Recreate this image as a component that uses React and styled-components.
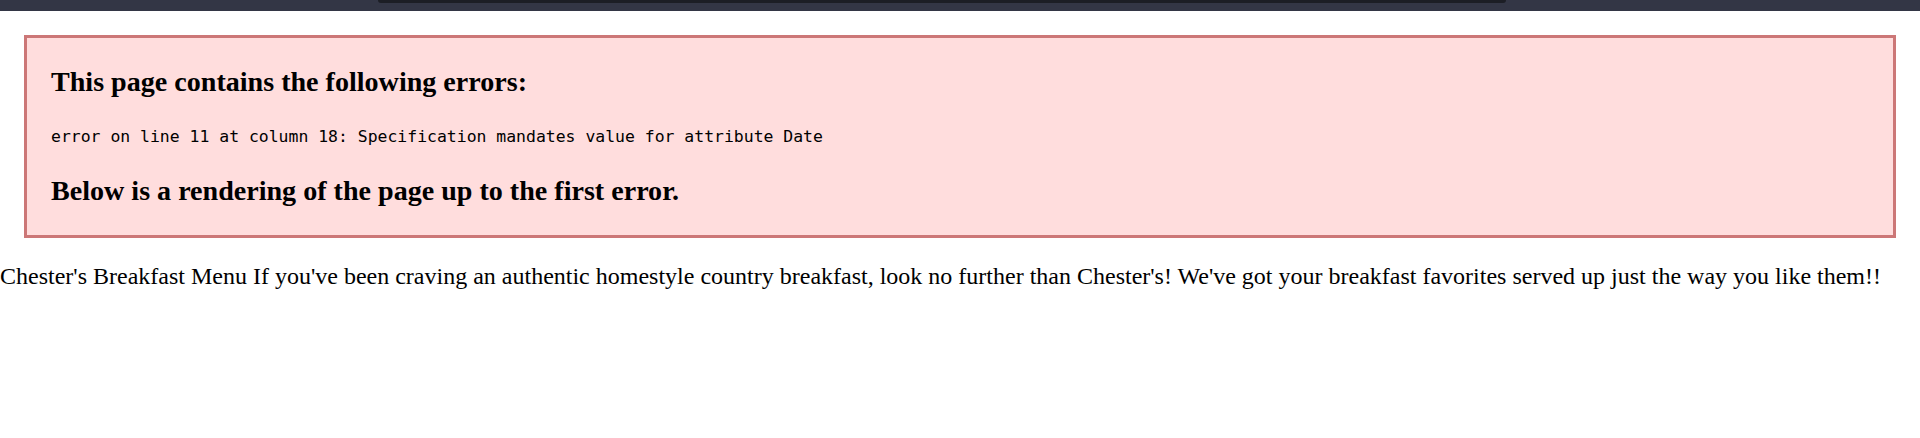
import React from "react";
import styled, { createGlobalStyle } from "styled-components";

const GlobalStyle = createGlobalStyle`
  html, body {
    margin: 0;
    padding: 0;
    background: #ffffff;
  }
  body {
    font-family: "Liberation Serif", "Times New Roman", serif;
    font-size: 24px;
    color: #000;
  }
`;

const TopBar = styled.div`
  height: 11px;
  background: #333645;
  display: flex;
  align-items: flex-start;
`;

const TabStrip = styled.div`
  margin-left: 378px;
  width: 1128px;
  height: 3px;
  background: #1c1e25;
  border-radius: 0 0 3px 3px;
`;

const ParserError = styled.div`
  display: block;
  margin: 24px;
  padding: 0 24px;
  border: 3px solid #cc7777;
  background-color: #ffdddd;
  color: black;
`;

const Heading = styled.h3`
  margin: 28px 0;
  font-family: "Liberation Serif", "Times New Roman", serif;
  font-size: 28.08px;
  font-weight: bold;
  line-height: 32px;
`;

const ErrorLine = styled.div`
  font-family: "DejaVu Sans Mono", "Liberation Mono", monospace;
  font-size: 16.45px;
  line-height: 21px;
  white-space: pre;
`;

const Rendered = styled.div`
  font-family: "Liberation Serif", "Times New Roman", serif;
  font-size: 24px;
  line-height: 29px;
  white-space: nowrap;
`;

export default function App() {
  return (
    <>
      <GlobalStyle />
      <TopBar>
        <TabStrip />
      </TopBar>
      <ParserError>
        <Heading>This page contains the following errors:</Heading>
        <ErrorLine>
          error on line 11 at column 18: Specification mandates value for attribute Date
        </ErrorLine>
        <Heading>Below is a rendering of the page up to the first error.</Heading>
      </ParserError>
      <Rendered>
        Chester's Breakfast Menu If you've been craving an authentic homestyle country breakfast, look no further than Chester's! We've got your breakfast favorites served up just the way you like them!!
      </Rendered>
    </>
  );
}
